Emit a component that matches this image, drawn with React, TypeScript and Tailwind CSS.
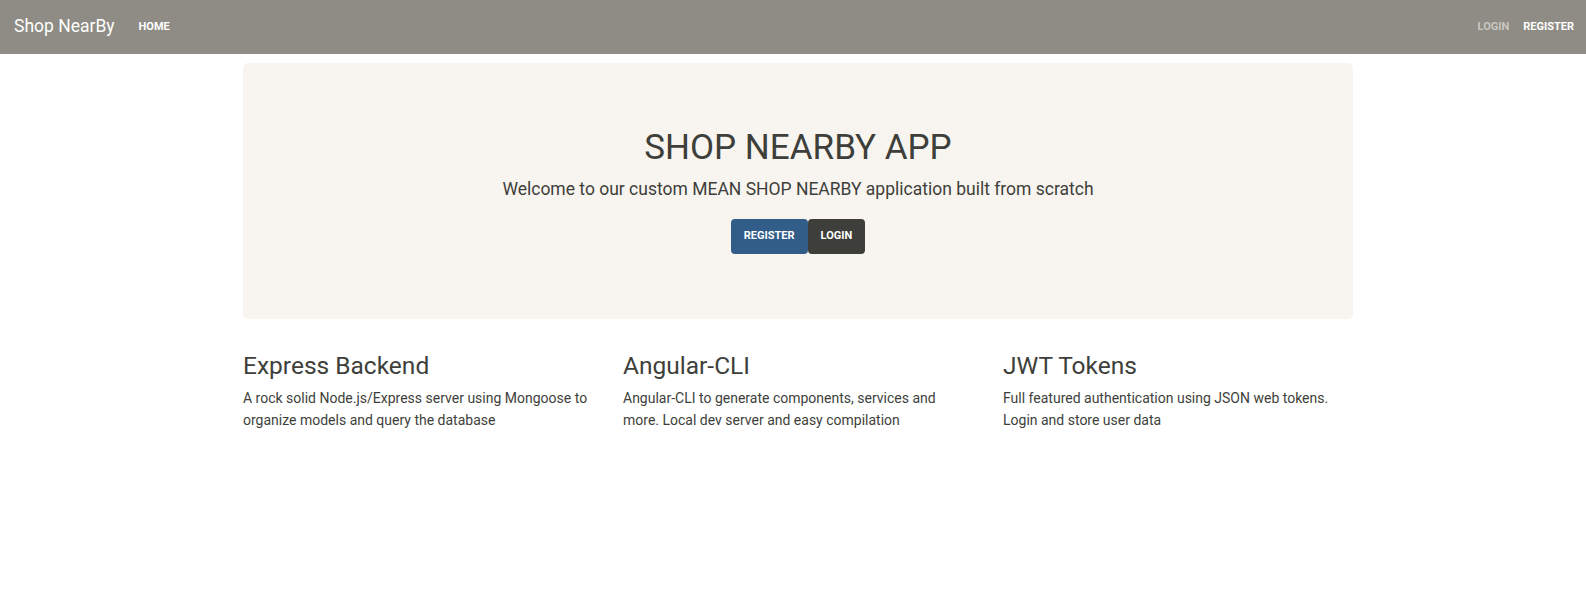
export default function App() {
  const features = [
    {
      title: "Express Backend",
      text: "A rock solid Node.js/Express server using Mongoose to organize models and query the database",
    },
    {
      title: "Angular-CLI",
      text: "Angular-CLI to generate components, services and more. Local dev server and easy compilation",
    },
    {
      title: "JWT Tokens",
      text: "Full featured authentication using JSON web tokens. Login and store user data",
    },
  ];

  return (
    <div className="min-h-screen bg-white text-[#3e3f3a] font-['Roboto',sans-serif]">
      {/* Navbar */}
      <nav className="h-[54px] bg-[#8e8c84] flex items-center pl-[14px] pr-[12px]">
        <span className="text-[17.5px] text-white leading-none">Shop NearBy</span>
        <a className="ml-[24px] text-[11px] font-bold uppercase text-white">Home</a>
        <div className="ml-auto flex items-center gap-[14px]">
          <a className="text-[11px] font-bold uppercase text-[#c9c7c1]">Login</a>
          <a className="text-[11px] font-bold uppercase text-white">Register</a>
        </div>
      </nav>

      <div className="w-[1110px] ml-[243px]">
        {/* Jumbotron */}
        <div className="mt-[9px] bg-[#f8f5f0] rounded-[5px] pt-[64px] pb-[65px] flex flex-col items-center">
          <h1 className="text-[35px] leading-[1.2] font-normal">SHOP NEARBY APP</h1>
          <p className="mt-[7px] text-[17.5px] leading-[27px]">
            Welcome to our custom MEAN SHOP NEARBY application built from scratch
          </p>
          <div className="mt-[16px] flex">
            <button className="h-[35px] px-[13px] rounded-[4px] bg-[#325d88] text-white text-[11px] font-bold uppercase">
              Register
            </button>
            <button className="h-[35px] px-[13px] rounded-[4px] bg-[#3e3f3a] text-white text-[11px] font-bold uppercase">
              Login
            </button>
          </div>
        </div>

        {/* Features */}
        <div className="mt-[32px] grid grid-cols-3 gap-[30px]">
          {features.map((f) => (
            <div key={f.title}>
              <h3 className="text-[24.5px] leading-[1.2] font-normal">{f.title}</h3>
              <p className="mt-[8px] text-[14px] leading-[21.7px]">{f.text}</p>
            </div>
          ))}
        </div>
      </div>
    </div>
  );
}
